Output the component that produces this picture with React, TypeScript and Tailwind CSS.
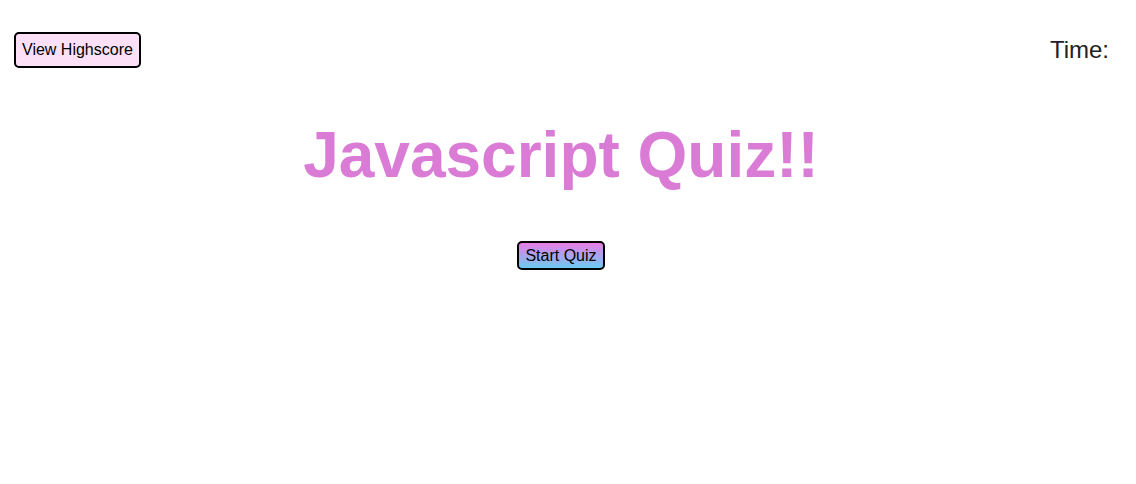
export default function App() {
  return (
    <div className="min-h-screen bg-white font-['Liberation_Sans',Arial,sans-serif] text-black">
      {/* HEADER */}
      <header className="flex items-start justify-between pl-[14px] pr-[27px] pt-[32px]">
        <button className="rounded-[5px] border-2 border-black bg-[#fce0f8] px-[6px] py-[7px] text-base leading-[18px]">
          View Highscore
        </button>
        <div className="pt-[4px] text-[24px] leading-[28px] text-[#222]">Time:</div>
      </header>

      {/* MAIN */}
      <main className="flex flex-col items-center pr-[14px]">
        <h1 className="mt-[50px] text-[64px] font-bold leading-[74px] text-[#da7cd6]">
          Javascript Quiz!!
        </h1>
        <button className="mt-[49px] rounded-[5px] border-2 border-black bg-[linear-gradient(to_bottom,#ea7ce6,#6ccbf2)] px-[6px] py-[3px] text-base leading-[19px]">
          Start Quiz
        </button>
      </main>
    </div>
  );
}
